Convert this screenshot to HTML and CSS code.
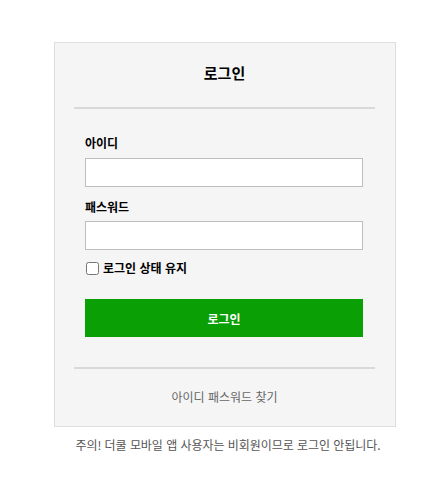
FILE: index.html
```html
<!DOCTYPE html>
<html lang="ko">
<head>
<meta charset="utf-8">
<title>로그인</title>
<link rel="stylesheet" href="styles.css">
</head>
<body>
<div class="wrap">
  <div class="box">
    <div class="title">로그인</div>
    <div class="rule"></div>
    <form class="form">
      <label class="label" for="uid">아이디</label>
      <input class="field field-first" id="uid" type="text">
      <label class="label label-pw" for="upw">패스워드</label>
      <input class="field" id="upw" type="password">
      <label class="keep"><input type="checkbox" class="check"><span>로그인 상태 유지</span></label>
      <button type="button" class="btn">로그인</button>
    </form>
    <div class="rule"></div>
    <div class="find">아이디 패스워드 찾기</div>
  </div>
  <p class="note">주의! 더쿨 모바일 앱 사용자는 비회원이므로 로그인 안됩니다.</p>
</div>
</body>
</html>
```
FILE: styles.css
```css
html, body {
  margin: 0;
  padding: 0;
  background: #fff;
}
body {
  font-family: "Noto Sans CJK KR", "Noto Sans", sans-serif;
  color: #000;
}
.wrap {
  width: 342px;
  margin: 42px 0 0 54px;
}
.box {
  box-sizing: border-box;
  width: 342px;
  border: 1px solid #dedede;
  background: #f5f5f5;
  padding: 0 20px 0 19px;
}
.title {
  height: 64px;
  line-height: 60px;
  text-align: center;
  font-size: 15px;
  font-weight: 700;
}
.rule {
  height: 2px;
  background: #d9d9d9;
}
.form {
  display: flex;
  flex-direction: column;
  padding: 26px 12px 30px 11px;
  margin: 0;
}
.label {
  display: block;
  height: 16px;
  line-height: 16px;
  font-size: 12px;
  font-weight: 700;
}
.label-pw {
  margin-top: 12px;
}
.field {
  box-sizing: border-box;
  width: 100%;
  height: 29px;
  margin: 6px 0 0 0;
  border: 1px solid #bdbdbd;
  background: #fff;
  padding: 0 6px;
  font: inherit;
  outline: none;
}
.field-first {
  margin-top: 7px;
}
.keep {
  display: flex;
  align-items: center;
  gap: 4px;
  height: 16px;
  margin-top: 10px;
  font-size: 12px;
  font-weight: 700;
  line-height: 16px;
}
.check {
  width: 13px;
  height: 13px;
  margin: 0 0 0 1px;
}
.btn {
  margin-top: 23px;
  height: 38px;
  border: 0;
  background: #0a9f05;
  color: #fff;
  font-family: inherit;
  font-size: 12px;
  font-weight: 700;
  padding: 0;
}
.find {
  height: 57px;
  line-height: 56px;
  text-align: center;
  font-size: 12px;
  color: #666;
}
.note {
  margin: 10px 0 0 0;
  padding-left: 6px;
  line-height: 16px;
  font-size: 12px;
  letter-spacing: -0.05px;
  color: #555;
  text-align: center;
}
```
